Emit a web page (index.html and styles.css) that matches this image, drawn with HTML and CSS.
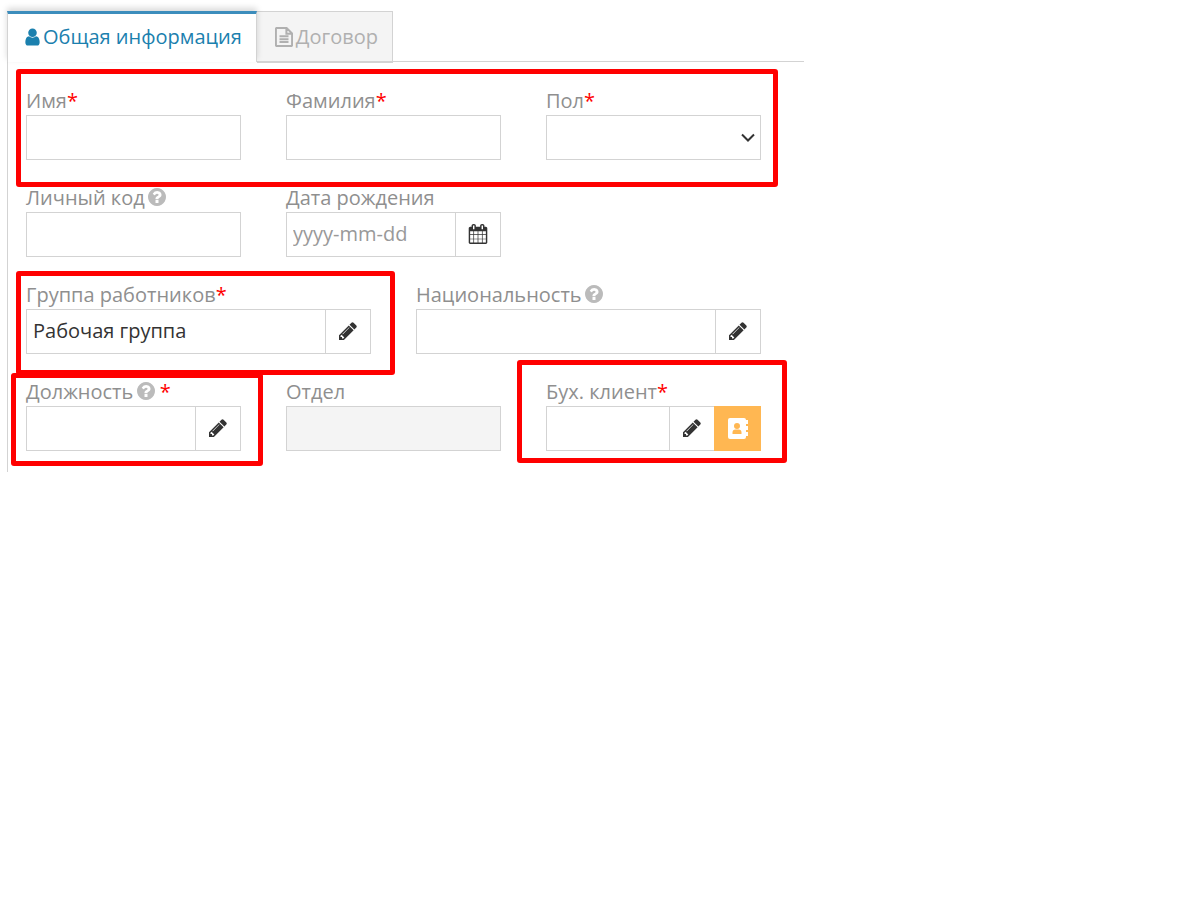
FILE: index.html
```html
<!DOCTYPE html>
<html lang="ru">
<head>
    <meta charset="UTF-8">
    <meta name="viewport" content="width=device-width, initial-scale=1.0">
    <title>Общая информация</title>
    <link rel="stylesheet" href="styles.css">
</head>
<body>
    <svg class="sprite" aria-hidden="true">
        <symbol id="pencil" viewBox="128 128 1536 1536">
            <path d="M491 1536l91-91-235-235-91 91v107h128v128h107zm523-928q0-22-22-22-10 0-17 7l-542 542q-7 7-7 17 0 22 22 22 10 0 17-7l542-542q7-7 7-17zm-54-192l416 416-832 832h-416v-416zm683 96q0 53-37 90l-166 166-416-416 166-165q36-38 90-38 53 0 91 38l235 234q37 39 37 91z"/>
        </symbol>
        <symbol id="question" viewBox="128 128 1536 1536">
            <path d="M1024 1376v-192q0-14-9-23t-23-9h-192q-14 0-23 9t-9 23v192q0 14 9 23t23 9h192q14 0 23-9t9-23zm256-672q0-88-55.5-163t-138.5-116-170-41q-243 0-371 213-15 24 8 42l132 100q7 6 19 6 16 0 25-12 53-68 86-92 34-24 86-24 48 0 85.5 26t37.5 59q0 38-20 61t-68 45q-63 28-115.5 86.5t-52.5 125.5v36q0 14 9 23t23 9h192q14 0 23-9t9-23q0-19 21.5-49.5t54.5-49.5q32-18 49-28.5t46-35 44.5-48 28-60.5 12.5-81zm384 192q0 209-103 385.5t-279.5 279.5-385.5 103-385.5-103-279.5-279.5-103-385.5 103-385.5 279.5-279.5 385.5-103 385.5 103 279.5 279.5 103 385.5z"/>
        </symbol>
    </svg>

    <div class="container">
        <nav class="tabs">
            <a href="#general" class="tab active">
                <svg class="icon-user" viewBox="256 0 1280 1792"><path d="M1536 1399q0 109-62.5 187t-150.5 78h-854q-88 0-150.5-78t-62.5-187q0-85 8.5-160.5t31.5-152 58.5-131 94-89 134.5-34.5q131 128 313 128t313-128q76 0 134.5 34.5t94 89 58.5 131 31.5 152 8.5 160.5zm-256-887q0 159-112.5 271.5t-271.5 112.5-271.5-112.5-112.5-271.5 112.5-271.5 271.5-112.5 271.5 112.5 112.5 271.5z"/></svg>
                <span>Общая информация</span>
            </a>
            <a href="#contract" class="tab">
                <svg class="icon-file" viewBox="0 0 18 20"><path d="M2 .9h9.500l5.600 5.600V18q0 1.100-1.100 1.100H2Q.9 19.100.9 18V2Q.9.900 2 .900zM11.400 1v5.700h5.600M4.500 9.300h9M4.500 12.200h9M4.500 15.100h9"/></svg>
                <span>Договор</span>
            </a>
        </nav>

        <form class="panel" id="general">
            <div class="row marked mark-names">
                <div class="field">
                    <label for="firstName">Имя<span class="required">*</span></label>
                    <input type="text" id="firstName" name="firstName">
                </div>
                <div class="field">
                    <label for="lastName">Фамилия<span class="required">*</span></label>
                    <input type="text" id="lastName" name="lastName">
                </div>
                <div class="field">
                    <label for="gender">Пол<span class="required">*</span></label>
                    <div class="select">
                        <select id="gender" name="gender">
                            <option value=""></option>
                        </select>
                        <svg class="chevron" viewBox="0 0 14 10"><path d="M1 1.500l6 6 6-6"/></svg>
                    </div>
                </div>
            </div>

            <div class="row">
                <div class="field">
                    <label for="personalCode">Личный код <svg class="help"><use href="#question"/></svg></label>
                    <input type="text" id="personalCode" name="personalCode">
                </div>
                <div class="field">
                    <label for="birthDate">Дата рождения</label>
                    <div class="input-group">
                        <input type="text" id="birthDate" name="birthDate" placeholder="yyyy-mm-dd">
                        <button type="button" aria-label="Дата рождения">
                            <svg class="icon-calendar" viewBox="64 0 1664 1792"><path d="M192 1664h288v-288h-288v288zm352 0h320v-288h-320v288zm-352-352h288v-320h-288v320zm352 0h320v-320h-320v320zm-352-384h288v-288h-288v288zm736 736h320v-288h-320v288zm-384-736h320v-288h-320v288zm768 736h288v-288h-288v288zm-384-352h320v-320h-320v320zm-352-864v-288q0-13-9.500-22.500t-22.500-9.500h-64q-13 0-22.500 9.500t-9.500 22.500v288q0 13 9.500 22.500t22.500 9.500h64q13 0 22.500-9.500t9.500-22.500zm736 864h288v-320h-288v320zm-384-384h320v-288h-320v288zm384 0h288v-288h-288v288zm32-480v-288q0-13-9.500-22.500t-22.500-9.500h-64q-13 0-22.500 9.500t-9.500 22.500v288q0 13 9.500 22.500t22.500 9.500h64q13 0 22.500-9.500t9.500-22.500zm384-64v1280q0 52-38 90t-90 38h-1408q-52 0-90-38t-38-90v-1280q0-52 38-90t90-38h128v-96q0-66 47-113t113-47h64q66 0 113 47t47 113v96h384v-96q0-66 47-113t113-47h64q66 0 113 47t47 113v96h128q52 0 90 38t38 90z"/></svg>
                        </button>
                    </div>
                </div>
            </div>

            <div class="row">
                <div class="field wide marked mark-group">
                    <label for="group">Группа работников<span class="required">*</span></label>
                    <div class="input-group">
                        <input type="text" id="group" name="group" value="Рабочая группа">
                        <button type="button" aria-label="Группа работников"><svg class="icon"><use href="#pencil"/></svg></button>
                    </div>
                </div>
                <div class="field wide">
                    <label for="nationality">Национальность <svg class="help"><use href="#question"/></svg></label>
                    <div class="input-group">
                        <input type="text" id="nationality" name="nationality">
                        <button type="button" aria-label="Национальность"><svg class="icon"><use href="#pencil"/></svg></button>
                    </div>
                </div>
            </div>

            <div class="row">
                <div class="field marked mark-position">
                    <label for="position">Должность <svg class="help"><use href="#question"/></svg> <span class="required">*</span></label>
                    <div class="input-group">
                        <input type="text" id="position" name="position">
                        <button type="button" aria-label="Должность"><svg class="icon"><use href="#pencil"/></svg></button>
                    </div>
                </div>
                <div class="field">
                    <label for="department">Отдел</label>
                    <input type="text" id="department" name="department" disabled>
                </div>
                <div class="field marked mark-client">
                    <label for="client">Бух. клиент<span class="required">*</span></label>
                    <div class="input-group">
                        <input type="text" id="client" name="client">
                        <button type="button" aria-label="Бух. клиент"><svg class="icon"><use href="#pencil"/></svg></button>
                        <button type="button" class="book" aria-label="Контакты">
                            <svg class="icon-book" viewBox="0 0 20 21">
                                <rect class="cover" x="0" y="0" width="18" height="21" rx="2"/>
                                <path class="cover" d="M18 2h2v4h-2zM18 8h2v4h-2zM18 14h2v4h-2z"/>
                                <circle cx="9" cy="8" r="3"/>
                                <path d="M4.500 16v-1.500q0-3 3-3h3q3 0 3 3v1.500z"/>
                            </svg>
                        </button>
                    </div>
                </div>
            </div>
        </form>
    </div>
</body>
</html>
```

FILE: styles.css
```css
* {
    box-sizing: border-box;
}

body {
    margin: 0;
    padding: 11px 7px;
    background: #fff;
    font-family: "Open Sans", sans-serif;
    font-size: 20px;
    line-height: 24px;
    color: #333;
}

.sprite {
    position: absolute;
    width: 0;
    height: 0;
}

.container {
    max-width: 797px;
}

/* Tabs */
.tabs {
    display: flex;
    height: 51px;
    border-bottom: 1px solid #d3d3d3;
}

.tab {
    display: flex;
    align-items: center;
    gap: 3px;
    height: 52px;
    padding: 0 14px 0 18px;
    background: #f4f4f4;
    border: 1px solid #d3d3d3;
    border-bottom-width: 2px;
    border-left: 0;
    color: #b0b0b0;
    text-decoration: none;
}

.tab.active {
    z-index: 1;
    height: 51px;
    padding: 0 14px 2px 17px;
    background: #fff;
    border: 1px solid #d3d3d3;
    border-top: 3px solid #3c8dbc;
    border-bottom: 0;
    box-shadow: 0 -3px 6px rgba(0, 0, 0, 0.15);
    color: #1b80ae;
}

.icon-user {
    width: 15px;
    height: 20px;
    fill: #1b80ae;
}

.icon-file {
    width: 18px;
    height: 20px;
    fill: none;
    stroke: #b0b0b0;
    stroke-width: 2;
}

/* Form */
.panel {
    display: flex;
    flex-direction: column;
    gap: 26px;
    padding: 27px 43px 21px 18px;
    border-left: 1px solid #d3d3d3;
}

.row {
    display: grid;
    grid-template-columns: repeat(6, 1fr);
    column-gap: 45px;
}

.field {
    grid-column: span 2;
    min-width: 0;
}

.field.wide {
    grid-column: span 3;
}

label {
    display: block;
    height: 26px;
    color: #8f8f8f;
    white-space: nowrap;
}

.required {
    color: #f00;
}

.help {
    width: 18px;
    height: 18px;
    margin-left: -2px;
    fill: #bbb;
    vertical-align: -1px;
}

input, select {
    display: block;
    width: 100%;
    height: 45px;
    padding: 0 6px 2px;
    background: #fff;
    border: 1px solid #d3d3d3;
    border-radius: 0;
    font: inherit;
    color: #333;
}

input::placeholder {
    color: #999;
}

input:disabled {
    background: #f4f4f4;
}

select {
    appearance: none;
}

.select {
    position: relative;
}

.chevron {
    position: absolute;
    top: 18px;
    right: 6px;
    width: 14px;
    height: 10px;
    fill: none;
    stroke: #333;
    stroke-width: 2;
    pointer-events: none;
}

.input-group {
    display: flex;
}

.input-group input {
    flex: 1;
    min-width: 0;
}

button {
    display: flex;
    flex: none;
    align-items: center;
    justify-content: center;
    width: 46px;
    height: 45px;
    margin-left: -1px;
    padding: 0 0 2px;
    background: #fff;
    border: 1px solid #d3d3d3;
    cursor: pointer;
}

.icon {
    width: 18px;
    height: 18px;
    fill: #333;
}

.icon-calendar {
    width: 20px;
    height: 20px;
    fill: #333;
}

.book {
    width: 47px;
    padding: 0;
    background: #ffb752;
    border-color: #ffb752;
}

.icon-book {
    width: 20px;
    height: 21px;
    fill: #ffb752;
}

.icon-book .cover {
    fill: #fff;
}

/* Red frames round the required fields */
.marked {
    position: relative;
}

.marked::after {
    content: '';
    position: absolute;
    border: 5px solid #f00;
    border-radius: 3px;
    pointer-events: none;
}

.mark-names::after {
    inset: -20px -17px -27px -10px;
}

.mark-group::after {
    inset: -12px -24px -21px -10px;
}

.mark-position::after {
    inset: -7px -22px -15px -15px;
}

.mark-client::after {
    inset: -20px -26px -12px -29px;
}
```
